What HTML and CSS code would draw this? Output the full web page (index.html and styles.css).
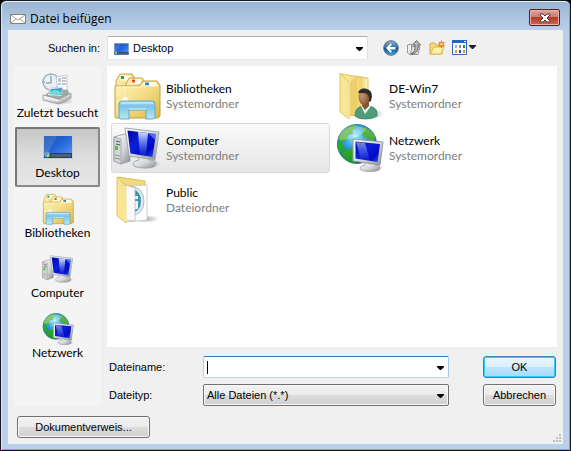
FILE: index.html
```html
<!DOCTYPE html>
<html lang="de">
<head>
<meta charset="utf-8">
<title>Datei beifügen</title>
<link rel="stylesheet" href="styles.css">
</head>
<body>
<svg class="sprites" width="0" height="0" aria-hidden="true">
  <defs>
    <linearGradient id="g-folder" x1="0" y1="0" x2="1" y2="1"><stop offset="0" stop-color="#fdf3b8"/><stop offset=".5" stop-color="#f3dc84"/><stop offset="1" stop-color="#d9b945"/></linearGradient>
    <linearGradient id="g-flap" x1="0" y1="0" x2="1" y2="0"><stop offset="0" stop-color="#fbefa9"/><stop offset=".75" stop-color="#f0d46f"/><stop offset="1" stop-color="#fff6c4"/></linearGradient>
    <linearGradient id="g-glass" x1="0" y1="0" x2="0" y2="1"><stop offset="0" stop-color="#a9dcf0"/><stop offset=".3" stop-color="#7fc4e4"/><stop offset="1" stop-color="#b9e9f6"/></linearGradient>
    <linearGradient id="g-screen" x1="0" y1="0" x2="1" y2="1"><stop offset="0" stop-color="#0008a0"/><stop offset=".4" stop-color="#0a20dc"/><stop offset=".75" stop-color="#0008c0"/><stop offset="1" stop-color="#2b62f0"/></linearGradient>
    <linearGradient id="g-shine" x1="0" y1="0" x2="0" y2="1"><stop offset="0" stop-color="#dfe9ff" stop-opacity=".95"/><stop offset="1" stop-color="#5a80ff" stop-opacity=".15"/></linearGradient>
    <linearGradient id="g-metal" x1="0" y1="0" x2="1" y2="1"><stop offset="0" stop-color="#fff"/><stop offset=".55" stop-color="#d4d7da"/><stop offset="1" stop-color="#878b90"/></linearGradient>
    <linearGradient id="g-desk" x1="0" y1="0" x2="1" y2="1"><stop offset="0" stop-color="#1a4fae"/><stop offset=".5" stop-color="#2568d8"/><stop offset="1" stop-color="#5a9cf2"/></linearGradient>
    <radialGradient id="g-globe" cx=".45" cy=".3" r=".7"><stop offset="0" stop-color="#a8f0fc"/><stop offset=".4" stop-color="#37a5de"/><stop offset="1" stop-color="#0c3a92"/></radialGradient>
    <linearGradient id="g-land" x1="0" y1="0" x2="0" y2="1"><stop offset="0" stop-color="#69b94a"/><stop offset="1" stop-color="#169c1c"/></linearGradient>
    <radialGradient id="g-face" cx=".3" cy=".45" r=".8"><stop offset="0" stop-color="#c99668"/><stop offset="1" stop-color="#6b3f22"/></radialGradient>
    <linearGradient id="g-back" x1="0" y1="0" x2="0" y2="1"><stop offset="0" stop-color="#8fb9d8"/><stop offset=".48" stop-color="#2c6aa3"/><stop offset=".5" stop-color="#0c4682"/><stop offset="1" stop-color="#39b4e4"/></linearGradient>
    <radialGradient id="g-shadow"><stop offset="0" stop-color="#555" stop-opacity=".5"/><stop offset="1" stop-color="#555" stop-opacity="0"/></radialGradient>
  </defs>

  <symbol id="i-library" viewBox="0 0 48 48">
    <path d="M3 44V9l4-7h12l3 4v38z" fill="url(#g-folder)" stroke="#cba347"/>
    <path d="M7.500 3.500h10v5h-10z" fill="#fffdf0"/><path d="M8 4h3v3H8z" fill="#27a542"/>
    <path d="M13 44V12l3-6h13l3 4v34z" fill="url(#g-folder)" stroke="#cba347"/>
    <path d="M18 7h10v5H18z" fill="#fffdf0"/><path d="M19 7.500h3v3h-3z" fill="#e6482c"/>
    <path d="M2 45V14h24l4-5h14l3 4v31l-2 2H3z" fill="url(#g-folder)" stroke="#c79c3b"/>
    <path d="M31 10h12l1 4H29z" fill="#fffdf0"/><path d="M32 10.500h4v3h-4z" fill="#2a8bd0"/>
    <path d="M3 15h25l2-1h15" fill="none" stroke="#fff9cf"/>
    <path d="M12 14v28M4 28h18M5 20l15 15M5 36l14-15" stroke="#fff" stroke-width=".7" opacity=".55"/><circle cx="12" cy="28" r="3" fill="#fff" opacity=".7"/>
    <path d="M6 46V32q0-3 3-3h30q3 0 3 3v14l-2 1h-7V38H16v9H8z" fill="url(#g-glass)" stroke="#61a9cb"/>
    <path d="M8 31h32M16 37h17" stroke="#dbf5fc" fill="none"/>
  </symbol>

  <symbol id="i-monitor" viewBox="0 0 48 48">
    <ellipse cx="33" cy="40" rx="15" ry="5" fill="url(#g-shadow)"/>
    <path d="M25 32h10l1 4q7 0 7 3.500 0 4.500-11 4.500t-12-4q0-3 6-4z" fill="url(#g-metal)" stroke="#8f9498" stroke-width=".7"/>
    <path d="M12 4l34 4-4 28-26-4z" fill="url(#g-metal)" stroke="#a4a9ae"/>
    <path d="M14.500 6.500l28.500 3.500-3.500 23-22-3.500z" fill="url(#g-screen)"/>
    <path d="M25 8l10 1-2 22.500-6-1z" fill="url(#g-shine)"/>
    <path d="M35 9l8 1-.8 6z" fill="#6e96ff" opacity=".7"/>
  </symbol>

  <symbol id="i-computer" viewBox="0 0 48 48">
    <path d="M1 13l10-3 6 2v25L8 40l-7-3z" fill="url(#g-metal)" stroke="#8e9296" stroke-width=".8"/>
    <path d="M1 13l7 2v25l-7-3z" fill="#d4d7d9" stroke="#929699" stroke-width=".7"/>
    <path d="M3 17l4 1M3 20l4 1" stroke="#555"/><path d="M2 22h3v4H2z" fill="#4bc827"/><path d="M2 31l5 1M2 34l5 1" stroke="#929699"/>
    <use href="#i-monitor"/>
  </symbol>

  <symbol id="i-network" viewBox="0 0 48 48">
    <circle cx="21" cy="20" r="19.500" fill="url(#g-globe)" stroke="#3c75ac"/>
    <path d="M5 9q7-8 14-8l2 3-5 2 1 4-5 1-2 6-5 1-3-3zM25 3q9 0 14 10l-2 8-5-3 1-5-5 1-2-4 2-3zM10 26l7-2 5 5 1 9-7 1q-8-3-11-10z" fill="url(#g-land)"/>
    <path d="M1 20q2-4 5-1l3 6-4 4q-4-3-4-9z" fill="#21a930"/>
    <path d="M6 8Q16-1 30 5q-4 9-25 11-4-2 1-8z" fill="#fff" opacity=".25"/>
    <ellipse cx="35" cy="44" rx="13" ry="4" fill="url(#g-shadow)"/>
    <path d="M27 37h10l2 4q5 0 5 3 0 3.500-10 3.500T24 44q0-2 5-3z" fill="url(#g-metal)" stroke="#8e9296" stroke-width=".7"/>
    <path d="M17 15l30 3-3 23-27-4z" fill="url(#g-metal)" stroke="#92989e"/>
    <path d="M19.500 17.500l24.500 2.500-2.500 18-22-3.500z" fill="url(#g-screen)"/>
    <path d="M20 18l9 1 5 18-9-1.500z" fill="url(#g-shine)" opacity=".6"/>
  </symbol>

  <symbol id="i-user" viewBox="0 0 48 48">
    <ellipse cx="34" cy="42" rx="14" ry="6" fill="url(#g-shadow)"/>
    <path d="M5 2l27 4v37l-23 1z" fill="url(#g-flap)" stroke="#d3b14a" stroke-width=".8"/>
    <path d="M13 11l8-7v37l-8 4z" fill="#e8c961" opacity=".7"/>
    <path d="M4 1l9 9q-1 5 0 16v21l-9-7z" fill="#f7e695" stroke="#d7b956" stroke-width=".8"/>
    <path d="M13 10v36" stroke="#fff7c8"/>
    <path d="M19 44q0-9 8-10h7q8 2 7 10-5 3-12 3-7 0-10-3z" fill="#4e9c79" stroke="#377d61" stroke-width=".8"/>
    <path d="M25 34l4 8 6-8-2-3h-7z" fill="#e9f5ef"/><path d="M26 30h7v4l-4 4-3-4z" fill="#875435"/>
    <ellipse cx="28.500" cy="25" rx="6" ry="8.500" fill="url(#g-face)"/>
    <path d="M22 21q2-6 9-4 7 2 4 12l-2 1q1-8-4-9-5 0-7 0z" fill="#2e2d2d"/>
  </symbol>

  <symbol id="i-public" viewBox="0 0 48 48">
    <ellipse cx="33" cy="43" rx="13" ry="4" fill="url(#g-shadow)"/>
    <path d="M5 1l27 4v15H9z" fill="#f2d97b" stroke="#d3b14a" stroke-width=".8"/>
    <path d="M12 10l22-1v35l-21 2z" fill="#fff" stroke="#bbb" stroke-width=".7"/>
    <path d="M18 10q13 2 13 15T18 40z" fill="#dceaf0" stroke="#a9bec7"/>
    <path d="M19 13q9 2 9 12t-9 12z" fill="#4593ad"/>
    <path d="M22 20h3v3h-3zM22 25h3v8h-3z" fill="#e9f7fb"/>
    <path d="M12 9l10 3v33l-10-1z" fill="#fafafa" stroke="#bdbdbd" stroke-width=".8"/>
    <path d="M4 1l9 9q-1 5 0 16v21l-9-7z" fill="#f7e695" stroke="#d7b956" stroke-width=".8"/>
    <path d="M13 10v36" stroke="#fff7c8"/>
  </symbol>

  <symbol id="i-desktop" viewBox="0 0 30 24">
    <path d="M0 0h30v24H0z" fill="#c7ccd4"/><path d="M1 1h28v22H1z" fill="url(#g-desk)"/>
    <path d="M1 1h13L5 18H1z" fill="#fff" opacity=".12"/>
    <path d="M1 18h28v5H1z" fill="#233f62"/><path d="M8 19h20v3H8z" fill="#4d6075"/>
    <circle cx="4" cy="19.500" r="3" fill="#3aa8dc"/><path d="M2 18h2v1.500H2z" fill="#f17b38"/><path d="M4.500 18h1.500v1.500H4.500z" fill="#8ed34e"/><path d="M4 20h2v1.500H4z" fill="#ffe15a"/>
  </symbol>

  <symbol id="i-recent" viewBox="0 0 32 32">
    <ellipse cx="18" cy="28" rx="14" ry="4" fill="url(#g-shadow)"/>
    <circle cx="9" cy="9" r="8" fill="#e9f1f5" stroke="#a3b3bc" stroke-width="1.500"/>
    <path d="M9 3v7H4M9 1v1M2 9h1" stroke="#75868f" fill="none"/>
    <path d="M14 4l11-2v15l-9 1z" fill="#fff" stroke="#b5bcc0" stroke-width=".8"/>
    <path d="M16 6h3M16 8h3M20 5h4M20 8h4M20 11h4M16 11h3" stroke="#778eaa"/>
    <path d="M2 23l9-8 15 2 2 5-10 7z" fill="#a2a7aa"/>
    <path d="M8 15l13-1-2 9-13-1z" fill="#fff" stroke="#b3c0c7" stroke-width=".6"/>
    <path d="M9 16l11-1-1 7-12-1z" fill="#2e9fd7"/><path d="M8 19q5-4 11 0l-.5 3L7 21z" fill="#75d9d0"/>
    <path d="M1 22l16 4 12-6v5l-12 6-16-4z" fill="url(#g-metal)" stroke="#8e9498" stroke-width=".8"/>
    <path d="M3 24l14 4" stroke="#fff"/>
  </symbol>
  <symbol id="i-caret" viewBox="0 0 7 4"><path d="M0 0h7v1L4 4H3L0 1z" fill="#000"/></symbol>
</svg>

<form class="dialog" aria-labelledby="dialog-title">
  <header class="titlebar">
    <svg class="titlebar-icon" viewBox="0 0 16 10" aria-hidden="true"><path d="M.5.5h15v9H.5z" fill="#fff" stroke="#85827d"/><path d="M1 1l7 5 7-5M1 9l5-4M15 9l-5-4" fill="none" stroke="#a39f98"/></svg>
    <h1 class="title" id="dialog-title">Datei beifügen</h1>
    <button class="close" type="button" aria-label="Schließen">
      <svg width="12" height="10" viewBox="0 0 12 10" aria-hidden="true"><path d="M1 1h3l2 2 2-2h3v1L8 5l3 3v1H8L6 7 4 9H1V8l3-3-3-3z" fill="#fff" stroke="#5b3a3c"/></svg>
    </button>
  </header>

  <div class="client">
    <div class="toolbar">
      <label class="look-label" for="look-in">Suchen in:</label>
      <div class="combo look-combo">
        <svg class="look-icon" preserveAspectRatio="none" aria-hidden="true" viewBox="0 0 30 24"><use href="#i-desktop"/></svg>
        <select id="look-in" class="field look-select"><option>Desktop</option></select>
        <svg class="caret" aria-hidden="true"><use href="#i-caret"/></svg>
      </div>
      <div class="tools">
        <button class="tool" type="button" aria-label="Zurück"><svg width="16" height="16" viewBox="0 0 16 16"><circle cx="8" cy="8" r="7.300" fill="url(#g-back)" stroke="#5b7184"/><path d="M3 8l4.500-4.500 1.500 1L7 7h5.500v2.500H7l2 2-1.500 1.200z" fill="#fff"/></svg></button>
        <button class="tool" type="button" aria-label="Übergeordneter Ordner"><svg width="16" height="16" viewBox="0 0 16 16"><path d="M1.500 5l4-1v9l-1 2-3-2z" fill="#eee" stroke="#999"/><path d="M4.500 14.500l1.500-8h8l-2 8z" fill="#e3e3e3" stroke="#999"/><path d="M5 14q5-2 4-9H6.500l4-4.500 4 4.500H12q1 7-5 9z" fill="#bbb" stroke="#666"/></svg></button>
        <button class="tool" type="button" aria-label="Neuer Ordner"><svg width="16" height="16" viewBox="0 0 16 16"><path d="M1 14V4l1-1h4l1 2h6v9z" fill="#f5dc83" stroke="#d6a83f"/><path d="M1.500 14l3-7H15l-3 7z" fill="#fff0a8" stroke="#dfb64e"/><path d="M12.500 0l1 2.500L16 2l-1.500 2.200L16 6.500l-2.500-.3-1 2.300-1-2.300-2.500.3 1.500-2.300L9 2l2.500.5z" fill="#ee6b28"/><circle cx="12.500" cy="4.200" r="1.400" fill="#ffdc4e"/></svg></button>
        <button class="tool view-tool" type="button" aria-label="Ansicht"><svg width="24" height="16" viewBox="0 0 24 16"><path d="M.5.5h14v14H.5z" fill="#fff" stroke="#2d68bd"/><path d="M0 0h15v3H0z" fill="#1c65cf"/><path d="M12 1h2v1h-2z" fill="#fff"/><path d="M3 5h2v3H3z" fill="#aaa9ce"/><path d="M7 5h2v3H7z" fill="#7594ac"/><path d="M11 5h2v3h-2z" fill="#178e43"/><path d="M3 10h2v3H3z" fill="#f2876c"/><path d="M7 10h2v3H7z" fill="#3044b8"/><path d="M11 10h2v3h-2z" fill="#c5a020"/><path d="M17 5h7v1l-3 3h-1l-3-3z" fill="#222"/></svg></button>
      </div>
    </div>

    <div class="content">
      <nav class="places" aria-label="Orte">
        <button class="place" type="button"><svg class="place-icon" aria-hidden="true"><use href="#i-recent"/></svg>Zuletzt besucht</button>
        <button class="place selected" type="button"><svg class="place-icon desktop" aria-hidden="true"><use href="#i-desktop"/></svg>Desktop</button>
        <button class="place" type="button"><svg class="place-icon" aria-hidden="true"><use href="#i-library"/></svg>Bibliotheken</button>
        <button class="place" type="button"><svg class="place-icon" aria-hidden="true"><use href="#i-computer"/></svg>Computer</button>
        <button class="place" type="button"><svg class="place-icon" aria-hidden="true"><use href="#i-network"/></svg>Netzwerk</button>
      </nav>

      <div class="main">
        <ul class="files">
          <li class="file"><svg class="file-icon" aria-hidden="true"><use href="#i-library"/></svg><div><div>Bibliotheken</div><div class="kind">Systemordner</div></div></li>
          <li class="file"><svg class="file-icon" aria-hidden="true"><use href="#i-user"/></svg><div><div>DE-Win7</div><div class="kind">Systemordner</div></div></li>
          <li class="file current"><svg class="file-icon" aria-hidden="true"><use href="#i-computer"/></svg><div><div>Computer</div><div class="kind">Systemordner</div></div></li>
          <li class="file"><svg class="file-icon" aria-hidden="true"><use href="#i-network"/></svg><div><div>Netzwerk</div><div class="kind">Systemordner</div></div></li>
          <li class="file"><svg class="file-icon" aria-hidden="true"><use href="#i-public"/></svg><div><div>Public</div><div class="kind">Dateiordner</div></div></li>
        </ul>

        <div class="form">
          <label for="file-name">Dateiname:</label>
          <div class="combo">
            <input id="file-name" class="field name-field" type="text" autocomplete="off">
            <svg class="caret" aria-hidden="true"><use href="#i-caret"/></svg>
          </div>
          <button class="button default" type="submit">OK</button>
          <label for="file-type">Dateityp:</label>
          <div class="combo">
            <select id="file-type" class="field type-field"><option>Alle Dateien (*.*)</option></select>
            <svg class="caret" aria-hidden="true"><use href="#i-caret"/></svg>
          </div>
          <button class="button" type="button">Abbrechen</button>
        </div>
      </div>
    </div>

    <footer class="footer">
      <button class="button link-button" type="button">Dokumentverweis...</button>
      <svg class="grip" width="8" height="8" viewBox="0 0 8 8" aria-hidden="true"><path d="M6 0h2v2H6zM3 3h2v2H3zM6 3h2v2H6zM0 6h2v2H0zM3 6h2v2H3zM6 6h2v2H6z" fill="#bfbfbf"/></svg>
    </footer>
  </div>
</form>
</body>
</html>
```

FILE: styles.css
```css
* {
  box-sizing: border-box;
}

body {
  margin: 0;
  background: #000;
  color: #000;
  font: 11px/15px "Liberation Sans", Arial, sans-serif;
}

button,
input,
select {
  margin: 0;
  font: inherit;
  color: inherit;
}

.sprites {
  position: absolute;
}

.dialog {
  display: flex;
  flex-direction: column;
  min-height: 100vh;
  padding: 0 6px 6px;
  border: 1px solid #16181c;
  border-radius: 6px 6px 0 0;
  background: linear-gradient(#9ab4d2, #b9d1ea 30px);
  box-shadow: inset 0 1px #e8f1fa, inset 1px 0 #d9e8f6, inset -1px -1px #35c3e6;
}

.titlebar {
  display: flex;
  align-items: center;
  height: 29px;
  padding: 6px 3px 0;
}

.titlebar-icon {
  width: 16px;
  height: 10px;
}

.title {
  flex: 1;
  margin: 0 0 0 4px;
  font: 12px/16px "Open Sans", "Noto Sans", sans-serif;
}

.close {
  display: flex;
  align-items: center;
  justify-content: center;
  width: 31px;
  height: 17px;
  margin: -2px 1px 0 0;
  padding: 0;
  border: 1px solid #521f22;
  border-radius: 2px;
  background: linear-gradient(#e0a79d, #cc796b 48%, #b53b24 50%, #cc6b52);
  box-shadow: inset 0 0 0 1px #e5b3aa;
}

.client {
  display: flex;
  flex: 1;
  flex-direction: column;
  padding: 0 6px;
  margin: 0 1px;
  background: #f0f0f0;
}

.toolbar {
  display: flex;
  align-items: center;
  height: 36px;
  gap: 7px;
}

.look-label {
  width: 86px;
  text-align: right;
}

.combo {
  position: relative;
}

.look-combo {
  flex: 0 1 261px;
}

.look-icon {
  position: absolute;
  top: 7px;
  left: 7px;
  width: 15px;
  height: 12px;
  pointer-events: none;
}

.caret {
  position: absolute;
  top: 50%;
  right: 5px;
  width: 7px;
  height: 4px;
  margin-top: -1px;
  pointer-events: none;
}

.field {
  display: block;
  width: 100%;
  height: 22px;
  padding: 0 18px 0 3px;
  border: 1px solid #707070;
  border-radius: 2px;
  outline: 0;
  appearance: none;
}

.look-select {
  height: 24px;
  padding-left: 25px;
  border-color: #abadb3 #dbdfe6 #e3e9ef #e2e3ea;
  background: #fff;
}

.name-field {
  border-color: #3d7bad #a4c9e3 #b7d9ed #b5cfe7;
  background: linear-gradient(#000, #000) 3px 4px / 1px 13px no-repeat #fff;
}

.type-field,
.button {
  background: linear-gradient(#f2f2f2, #ebebeb 49%, #dddddd 50%, #cfcfcf);
  box-shadow: inset 0 0 0 1px #f8f8f8;
}

.tools {
  display: flex;
  gap: 7px;
  padding-left: 8px;
}

.tool {
  display: block;
  height: 16px;
  padding: 0;
  border: 0;
  background: none;
}

.tool svg {
  display: block;
}

.content {
  display: grid;
  flex: 1;
  grid-template-columns: 87px 1fr;
  gap: 6px;
}

.places {
  padding: 1px;
  background: #f4f4f4;
  font: 12px/16px Lato, "Open Sans", sans-serif;
}

.place {
  display: flex;
  flex-direction: column;
  align-items: center;
  width: 100%;
  height: 60px;
  padding: 5px 0 0;
  border: 1px solid transparent;
  background: none;
  white-space: nowrap;
}

.place.selected {
  border: 2px solid #777;
  border-color: #777 #888 #888 #777;
  border-radius: 2px;
  background: linear-gradient(#c6c6c6, #dedede 50%, #e6e6e6);
}

.place-icon {
  width: 32px;
  height: 32px;
}

.place-icon.desktop {
  width: 30px;
  height: 24px;
  margin: 1px 0 6px;
}

.main {
  display: flex;
  flex-direction: column;
}

.files {
  display: grid;
  flex: 1;
  grid-template-columns: repeat(auto-fill, 219px);
  align-content: start;
  gap: 2px 4px;
  min-height: 280px;
  margin: 0;
  padding: 5px 4px;
  background: #fff;
  font: 12px/15px Lato, "Open Sans", sans-serif;
  list-style: none;
}

.file {
  display: flex;
  align-items: center;
  gap: 5px;
  height: 50px;
  padding: 0 1px;
  border: 1px solid transparent;
  border-radius: 3px;
}

.file.current {
  border-color: #d9d9d9;
  background: linear-gradient(#fafafa, #e6e6e6);
}

.file-icon {
  width: 48px;
  height: 48px;
}

.kind {
  color: #808080;
}

.form {
  display: grid;
  grid-template-columns: 94px 246px 1fr;
  grid-template-rows: 22px 22px;
  align-items: center;
  gap: 6px 0;
  padding: 9px 1px 0 2px;
}

.button {
  height: 22px;
  padding: 0;
  border: 1px solid #707070;
  border-radius: 3px;
}

.form .button {
  justify-self: end;
  width: 73px;
}

.button.default {
  border-color: #3c7fb1;
  background: linear-gradient(#eaf6fd, #d9f0fc 49%, #bee6fd 50%, #a7d9f5);
  box-shadow: inset 0 0 0 1px #2fd0f5;
}

.footer {
  display: flex;
  align-items: flex-end;
  justify-content: space-between;
  padding: 10px 0 6px 3px;
}

.link-button {
  width: 133px;
}

.grip {
  margin: 0 -4px -4px 0;
}
```
